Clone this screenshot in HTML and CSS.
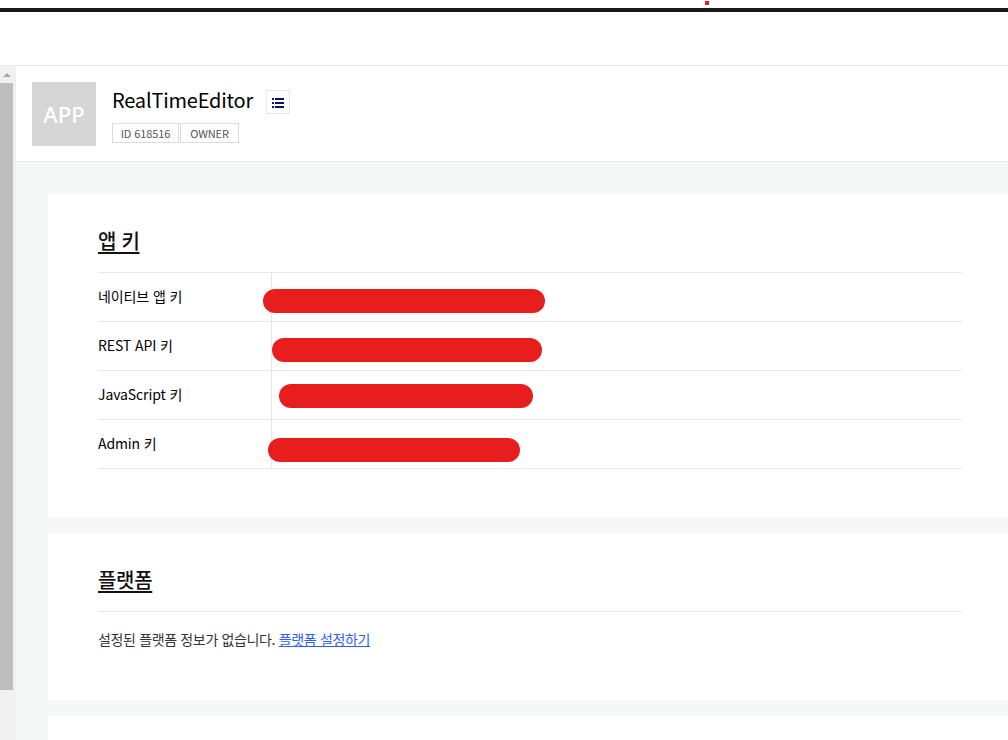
FILE: index.html
```html
<!DOCTYPE html>
<html lang="ko">
<head>
<meta charset="utf-8">
<title>RealTimeEditor</title>
<link rel="stylesheet" href="styles.css">
</head>
<body>
<span class="red-dot"></span>
<div class="topbar"></div>
<div class="main">
  <div class="scrollbar">
    <div class="scroll-btn"><span class="scroll-arrow"></span></div>
    <div class="scroll-thumb"></div>
  </div>
  <div class="content">
    <header class="app-head">
      <div class="app-thumb">APP</div>
      <div class="app-info">
        <div class="app-title-row">
          <h1 class="app-title">RealTimeEditor</h1>
          <button class="list-btn" aria-label="목록">
            <svg width="12" height="10" viewBox="0 0 12 10"><path fill="#0a1560" d="M0 0h2v2H0zM3 0h9v2H3zM0 4h2v2H0zM3 4h9v2H3zM0 8h2v2H0zM3 8h9v2H3z"/></svg>
          </button>
        </div>
        <div class="tags"><span class="tag tag-id">ID 618516</span><span class="tag tag-role">OWNER</span></div>
      </div>
    </header>
    <div class="cards">
      <section class="card card-keys">
        <h2 class="card-title">앱 키</h2>
        <div class="rows">
          <div class="row"><div class="row-label">네이티브 앱 키</div><div class="row-value"><span class="scribble s1"></span></div></div>
          <div class="row"><div class="row-label">REST API 키</div><div class="row-value"><span class="scribble s2"></span></div></div>
          <div class="row"><div class="row-label">JavaScript 키</div><div class="row-value"><span class="scribble s3"></span></div></div>
          <div class="row"><div class="row-label">Admin 키</div><div class="row-value"><span class="scribble s4"></span></div></div>
        </div>
      </section>
      <section class="card card-platform">
        <h2 class="card-title">플랫폼</h2>
        <p class="platform-text">설정된 플랫폼 정보가 없습니다. <a href="#" class="link">플랫폼 설정하기</a></p>
      </section>
      <section class="card card-empty"></section>
    </div>
  </div>
</div>
</body>
</html>
```
FILE: styles.css
```css
* { box-sizing: border-box; }
html, body { margin: 0; height: 740px; overflow: hidden; background: #fff; }
body {
  position: relative;
  padding-top: 8px;
  font-family: "Noto Sans CJK KR", "Noto Sans", sans-serif;
  color: #1a1a1a;
}
.red-dot { position: absolute; left: 705px; top: 1px; width: 4px; height: 4px; background: #e81e1e; }
.topbar { height: 4px; background: #1a1a1a; }
.main {
  display: flex;
  margin-top: 53px;
  height: 675px;
  border-top: 1px solid #e6e6e6;
}
.scrollbar { width: 16px; flex: none; background: #f0f0f0; padding-right: 3px; }
.scroll-btn { height: 17px; display: flex; align-items: center; justify-content: center; }
.scroll-arrow { width: 0; height: 0; border: 4px solid transparent; border-top: 0; border-bottom: 4px solid #a8a8a8; }
.scroll-thumb { height: 607px; background: #bdbdbd; }
.content { flex: 1; min-width: 0; background: #f6f8f8; }
.app-head {
  display: flex;
  height: 96px;
  padding: 16px 16px 0;
  background: #fff;
  border-bottom: 1px solid #e6e6e6;
}
.app-thumb {
  width: 64px;
  height: 64px;
  display: flex;
  align-items: center;
  justify-content: center;
  background: #d6d6d6;
  color: #fff;
  font-size: 22px;
  font-family: "Noto Sans", sans-serif;
  font-weight: 500;
}
.app-info { margin-left: 16px; }
.app-title-row { display: flex; align-items: flex-start; gap: 13px; height: 36px; }
.app-title { margin: 0; font-size: 20px; letter-spacing: -0.2px; font-weight: 400; line-height: 36px; color: #000; }
.list-btn {
  width: 24px;
  height: 24px;
  margin-top: 8px;
  padding: 1px 0 0;
  display: flex;
  align-items: center;
  justify-content: center;
  background: #fff;
  border: 1px solid #e6e6e6;
}
.tags { display: flex; gap: 1px; margin-top: 5px; }
.tag {
  height: 20px;
  display: flex;
  align-items: center;
  justify-content: center;
  border: 1px solid #dcdcdc;
  font-size: 11px;
  letter-spacing: -0.1px;
  color: #555;
}
.tag-id { width: 67px; }
.tag-role { width: 59px; }
.cards { display: flex; flex-direction: column; gap: 16px; padding: 32px 0 0 32px; }
.card { background: #fff; padding: 0 46px 0 50px; }
.card-keys { height: 323px; padding-top: 29px; }
.card-platform { height: 167px; padding-top: 29px; }
.card-empty { height: 60px; }
.card-title { margin: 0; height: 49px; font-size: 20px; letter-spacing: -0.3px; line-height: 36px; font-weight: 500; color: #111; text-decoration: underline; text-underline-offset: 3px; }
.rows { border-top: 1px solid #e6e6e6; }
.row { display: flex; height: 49px; border-bottom: 1px solid #e6e6e6; }
.row-label { width: 174px; padding-top: 12px; font-size: 14px; letter-spacing: -0.1px; line-height: 22px; font-weight: 400; color: #000; border-right: 1px solid #e6e6e6; }
.row-value { flex: 1; position: relative; }
.scribble { position: absolute; height: 24px; border-radius: 12px; background: #e81e1e; }
.s1 { left: -9px; top: 16px; width: 282px; }
.s2 { left: 0; top: 16px; width: 270px; }
.s3 { left: 7px; top: 13px; width: 254px; }
.s4 { left: -4px; top: 18px; width: 252px; }
.card-platform .card-title { border-bottom: 1px solid #e6e6e6; height: 50px; }
.platform-text { margin: 16px 0 0; font-size: 14px; letter-spacing: -0.35px; line-height: 22px; color: #333; }
.link { color: #2f5dff; }
```
